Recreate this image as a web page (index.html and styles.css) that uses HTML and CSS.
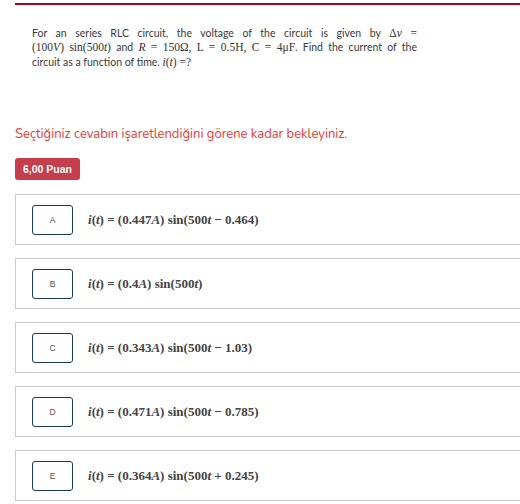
FILE: index.html
```html
<!DOCTYPE html>
<html>
<head>
<meta charset="utf-8">
<link rel="stylesheet" href="styles.css">
</head>
<body>
<div class="page">
  <div class="question">
    <p class="qtext"><span class="ln full">For an series RLC circuit, the voltage of the circuit is given by <span class="m">Δ<i>v</i> =</span></span><span class="ln full"><span class="m">(100<i>V</i>) sin(500<i>t</i>)</span> and <span class="m"><i>R</i> = 150Ω, L = 0.5H, C = 4μF</span>. Find the current of the</span><span class="ln">circuit as a function of time. <span class="m"><i>i</i>(<i>t</i>) =?</span></span></p>
  </div>
  <p class="notice">Seçtiğiniz cevabın işaretlendiğini görene kadar bekleyiniz.</p>
  <span class="badge">6,00 Puan</span>
  <div class="options">
    <div class="opt"><span class="letter">A</span><span class="m ans"><i>i</i>(<i>t</i>) = (0.447<i>A</i>) sin(500<i>t</i> − 0.464)</span></div>
    <div class="opt"><span class="letter">B</span><span class="m ans"><i>i</i>(<i>t</i>) = (0.4<i>A</i>) sin(500<i>t</i>)</span></div>
    <div class="opt"><span class="letter">C</span><span class="m ans"><i>i</i>(<i>t</i>) = (0.343<i>A</i>) sin(500<i>t</i> − 1.03)</span></div>
    <div class="opt"><span class="letter">D</span><span class="m ans"><i>i</i>(<i>t</i>) = (0.471<i>A</i>) sin(500<i>t</i> − 0.785)</span></div>
    <div class="opt"><span class="letter">E</span><span class="m ans"><i>i</i>(<i>t</i>) = (0.364<i>A</i>) sin(500<i>t</i> + 0.245)</span></div>
  </div>
</div>
</body>
</html>
```
FILE: styles.css
```css
html, body {
  margin: 0;
  padding: 0;
  background: #ffffff;
  overflow: hidden;
}
.page {
  padding-left: 15px;
  padding-top: 3px;
  font-family: "Lato", "Open Sans", sans-serif;
}
.question {
  border-top: 2px solid #b0002a;
  padding: 21px 0 0 17px;
  height: 99px;
}
.qtext {
  margin: 0;
  width: 385px;
  font-family: "Lato", sans-serif;
  font-size: 10.5px;
  line-height: 14.3px;
  color: #3a3a3a;
}
.ln {
  display: block;
  white-space: nowrap;
}
.ln.full {
  white-space: normal;
  text-align: justify;
  text-align-last: justify;
}
.m {
  font-family: "Liberation Serif", "DejaVu Serif", serif;
  font-size: 11.5px;
  color: #333;
}
.m i {
  font-style: italic;
}
.notice {
  margin: 0;
  font-family: "Nunito", "Lato", sans-serif;
  font-size: 13px;
  line-height: 18px;
  color: #ea3a36;
  height: 32px;
}
.badge {
  display: inline-block;
  background: #c63d4b;
  color: #fff;
  font-family: "Liberation Sans", Arial, sans-serif;
  font-weight: bold;
  font-size: 10.5px;
  line-height: 22px;
  height: 22px;
  padding: 0 8px;
  border-radius: 3px;
}
.options {
  margin-top: 14px;
  margin-right: -30px;
}
.opt {
  display: flex;
  align-items: center;
  height: 49px;
  border: 1px solid #c9c9c9;
  padding-left: 16px;
  margin-bottom: 13px;
}
.letter {
  width: 39px;
  height: 28px;
  border: 1px solid #1e3d59;
  border-radius: 3px;
  display: flex;
  align-items: center;
  justify-content: center;
  font-family: "Liberation Sans", Arial, sans-serif;
  font-size: 8.5px;
  color: #555;
  margin-right: 15px;
  flex: none;
}
.ans {
  font-size: 13px;
  font-weight: bold;
  color: #444;
}
```
